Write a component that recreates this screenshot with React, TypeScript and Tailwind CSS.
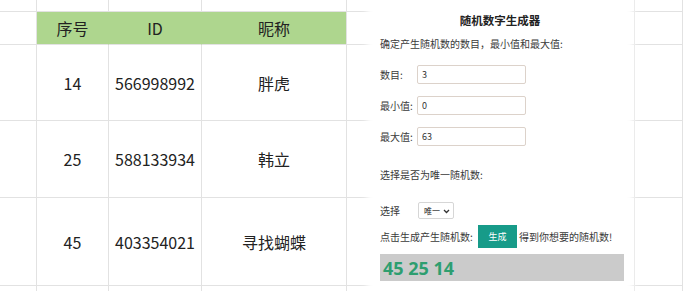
import React from "react";

const cols = [37, 72, 93, 145, 288, 48];
const rows: { h: number; cells: string[]; header?: boolean }[] = [
  { h: 12, cells: ["", "", "", "", "", ""] },
  { h: 33, cells: ["", "序号", "ID", "昵称", "", ""], header: true },
  { h: 76, cells: ["", "14", "566998992", "胖虎", "", ""] },
  { h: 77, cells: ["", "25", "588133934", "韩立", "", ""] },
  { h: 88, cells: ["", "45", "403354021", "寻找蝴蝶", "", ""] },
  { h: 20, cells: ["", "", "", "", "", ""] },
];

function Field({ label, value }: { label: string; value: string }) {
  return (
    <div className="flex items-center h-[19px]">
      <span className="w-[37px] shrink-0">{label}</span>
      <input
        readOnly
        value={value}
        className="w-[109px] h-[19px] border border-[#dcd2ca] rounded-[2px] pl-[4px] text-[9px] text-[#333] outline-none bg-white"
      />
    </div>
  );
}

export default function App() {
  return (
    <div
      className="relative w-[683px] h-[291px] overflow-hidden bg-white"
      style={{ fontFamily: '"Noto Sans CJK SC", "Noto Sans", sans-serif' }}
    >
      {/* spreadsheet grid */}
      <div className="flex flex-col">
        {rows.map((r, ri) => (
          <div key={ri} className="flex shrink-0" style={{ height: r.h }}>
            {cols.map((w, ci) => {
              const green = r.header && ci >= 1 && ci <= 3;
              return (
                <div
                  key={ci}
                  className={
                    "shrink-0 flex items-center justify-center border-b border-r text-[16px] text-[#222] " +
                    (green
                      ? "bg-[#aed68e] border-b-[#e2e2e2] " + (ci < 3 ? "border-r-[#aed68e]" : "border-r-[#e2e2e2]")
                      : "border-[#e2e2e2]")
                  }
                  style={{ width: w }}
                >
                  {r.cells[ci]}
                </div>
              );
            })}
          </div>
        ))}
      </div>

      {/* random number panel */}
      <div className="absolute left-[373px] top-0 w-[254px] h-[291px] bg-white shadow-[0_0_6px_6px_#ffffff] pl-[7px] text-[10px] text-[#3a3a3a]">
        <div className="mt-[12px] h-[16px] leading-[16px] text-center text-[11.5px] font-bold text-[#222] pr-[7px]">
          随机数字生成器
        </div>
        <div className="mt-[9px] h-[14px] leading-[14px]">确定产生随机数的数目，最小值和最大值:</div>
        <div className="mt-[14px] flex flex-col gap-[12px]">
          <Field label="数目:" value="3" />
          <Field label="最小值:" value="0" />
          <Field label="最大值:" value="63" />
        </div>
        <div className="mt-[22px] h-[14px] leading-[14px]">选择是否为唯一随机数:</div>
        <div className="mt-[20px] flex items-center h-[17px]">
          <span className="w-[38px] shrink-0">选择</span>
          <div className="w-[36px] h-[17px] border border-[#d6d6d6] rounded-[2px] flex items-center pl-[5px] gap-[3px] text-[8px] text-[#222]">
            <span>唯一</span>
            <svg width="7" height="5" viewBox="0 0 7 5" className="mt-[1px]">
              <path d="M1 1 L3.5 3.5 L6 1" fill="none" stroke="#333" strokeWidth="1.3" />
            </svg>
          </div>
        </div>
        <div className="mt-[6px] flex items-center h-[23px]">
          <span className="w-[98px] shrink-0">点击生成产生随机数:</span>
          <div className="w-[39px] h-[23px] bg-[#179b89] text-white text-[9px] flex items-center justify-center">
            生成
          </div>
          <span className="ml-[2px]">得到你想要的随机数!</span>
        </div>
        <div className="mt-[6px] w-[244px] h-[27px] bg-[#cbcbcb] flex items-center pl-[3px]">
          <span
            className="text-[18px] font-bold text-[#2e9e70] leading-none"
            style={{ fontFamily: '"Noto Sans", "Open Sans", sans-serif' }}
          >
            45 25 14
          </span>
        </div>
      </div>
    </div>
  );
}
